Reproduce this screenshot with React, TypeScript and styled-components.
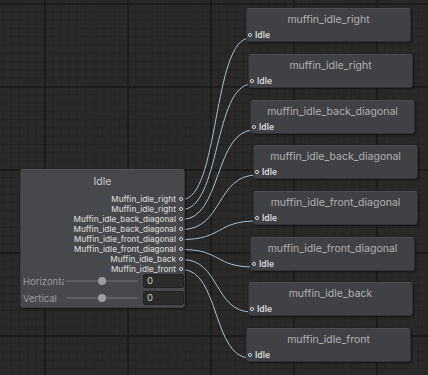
import React from "react";
import styled, { createGlobalStyle } from "styled-components";

const GlobalStyle = createGlobalStyle`
  html, body { margin: 0; padding: 0; background: #282828; }
  body { font-family: Inter, "Noto Sans", "Liberation Sans", sans-serif; }
`;

const targets = [
  { title: "muffin_idle_right", x: 246, y: 8 },
  { title: "muffin_idle_right", x: 248, y: 54 },
  { title: "muffin_idle_back_diagonal", x: 250, y: 100 },
  { title: "muffin_idle_back_diagonal", x: 253, y: 145 },
  { title: "muffin_idle_front_diagonal", x: 253, y: 191 },
  { title: "muffin_idle_front_diagonal", x: 250, y: 237 },
  { title: "muffin_idle_back", x: 248, y: 282 },
  { title: "muffin_idle_front", x: 246, y: 328 },
];

const outputs = [
  "Muffin_idle_right",
  "Muffin_idle_right",
  "Muffin_idle_back_diagonal",
  "Muffin_idle_back_diagonal",
  "Muffin_idle_front_diagonal",
  "Muffin_idle_front_diagonal",
  "Muffin_idle_back",
  "Muffin_idle_front",
];

const sliders = ["Horizontal", "Vertical"];

const SRC_X = 182;
const SRC_Y0 = 199.5;

export default function App() {
  return (
    <>
      <GlobalStyle />
      <Canvas>
        <Wires width={428} height={375}>
          {targets.map((t, i) => {
            const x1 = SRC_X;
            const y1 = SRC_Y0 + i * 10;
            const x2 = t.x + 4;
            const y2 = t.y + 30;
            const k = (x2 - x1) * 0.55;
            return (
              <path
                key={i}
                d={`M${x1} ${y1} C${x1 + k} ${y1}, ${x2 - k} ${y2}, ${x2} ${y2}`}
                fill="none"
                stroke="#a9bfd3"
                strokeWidth={1}
              />
            );
          })}
        </Wires>

        <IdleNode>
          <NodeTitle $light>Idle</NodeTitle>
          <Ports>
            {outputs.map((o, i) => (
              <OutRow key={i}>
                <PortLabel>{o}</PortLabel>
                <Dot />
              </OutRow>
            ))}
          </Ports>
          <Sliders>
            {sliders.map((s) => (
              <SliderRow key={s}>
                <SliderLabel>{s}</SliderLabel>
                <Track>
                  <Knob />
                </Track>
                <NumberBox>0</NumberBox>
              </SliderRow>
            ))}
          </Sliders>
        </IdleNode>

        {targets.map((t, i) => (
          <StateNode key={i} style={{ left: t.x, top: t.y }}>
            <NodeTitle>{t.title}</NodeTitle>
            <InRow>
              <Dot />
              <InLabel>Idle</InLabel>
            </InRow>
          </StateNode>
        ))}
      </Canvas>
    </>
  );
}

const Canvas = styled.div`
  position: relative;
  width: 428px;
  height: 375px;
  overflow: hidden;
  background-color: #292929;
  background-image: linear-gradient(#1c1c1c 2px, transparent 2px),
    linear-gradient(90deg, #1c1c1c 2px, transparent 2px),
    linear-gradient(#232323 1px, transparent 1px),
    linear-gradient(90deg, #232323 1px, transparent 1px);
  background-size: 83px 83px, 83px 83px, 8.3px 8.3px, 8.3px 8.3px;
  background-position: 0 3px, 44px 0, 0 3px, 44px 0;
`;

const Wires = styled.svg`
  position: absolute;
  left: 0;
  top: 0;
`;

const NodeBase = styled.div`
  position: absolute;
  box-sizing: border-box;
  border-radius: 3px;
  border: 1px solid #303136;
  border-top-color: #4c4d52;
  box-shadow: 1px 1px 2px rgba(0, 0, 0, 0.55);
  display: flex;
  flex-direction: column;
`;

const IdleNode = styled(NodeBase)`
  left: 20px;
  top: 169px;
  width: 165px;
  height: 139px;
  background: #47484c;
  border-color: #3a3b3f;
  border-top-color: #55565a;
`;

const StateNode = styled(NodeBase)`
  width: 165px;
  height: 34px;
  background: #404145;
  justify-content: space-between;
`;

const NodeTitle = styled.div<{ $light?: boolean }>`
  height: ${(p) => (p.$light ? 24 : 21)}px;
  line-height: ${(p) => (p.$light ? 24 : 22)}px;
  text-align: center;
  font-size: 10.5px;
  color: ${(p) => (p.$light ? "#c9c9c9" : "#b1b1b3")};
  white-space: nowrap;
`;

const Ports = styled.div`
  display: flex;
  flex-direction: column;
`;

const OutRow = styled.div`
  height: 10px;
  display: flex;
  align-items: center;
  justify-content: flex-end;
  gap: 3px;
  padding-right: 1px;
`;

const PortLabel = styled.span`
  font-size: 8.1px;
  font-weight: 500;
  color: #d2d2d2;
  white-space: nowrap;
  line-height: 10px;
`;

const Dot = styled.span`
  box-sizing: border-box;
  width: 4px;
  height: 4px;
  border-radius: 50%;
  border: 1px solid #e2e2e2;
  background: #222;
  flex: none;
`;

const InRow = styled.div`
  height: 10px;
  margin-bottom: 2px;
  display: flex;
  align-items: center;
  gap: 3px;
  padding-left: 1px;
`;

const InLabel = styled.span`
  font-size: 8.5px;
  font-weight: 600;
  color: #dcdcdc;
  line-height: 10px;
`;

const Sliders = styled.div`
  display: flex;
  flex-direction: column;
  gap: 3px;
`;

const SliderRow = styled.div`
  display: flex;
  align-items: center;
  height: 14px;
  padding-left: 2px;
`;

const SliderLabel = styled.span`
  width: 41px;
  overflow: hidden;
  white-space: nowrap;
  font-size: 9.5px;
  color: #9c9c9e;
  flex: none;
`;

const Track = styled.div`
  position: relative;
  width: 72px;
  height: 2px;
  margin-left: 2px;
  background: #5d5e62;
  border-radius: 1px;
  flex: none;
`;

const Knob = styled.span`
  position: absolute;
  left: 32px;
  top: -3px;
  width: 8px;
  height: 8px;
  border-radius: 50%;
  background: #9d9ea0;
`;

const NumberBox = styled.div`
  box-sizing: border-box;
  margin-left: 5px;
  width: 42px;
  height: 14px;
  padding-left: 3px;
  background: #2b2b2c;
  border: 1px solid #232325;
  border-radius: 2px;
  font-size: 9.5px;
  line-height: 12px;
  color: #c8c8c8;
`;
